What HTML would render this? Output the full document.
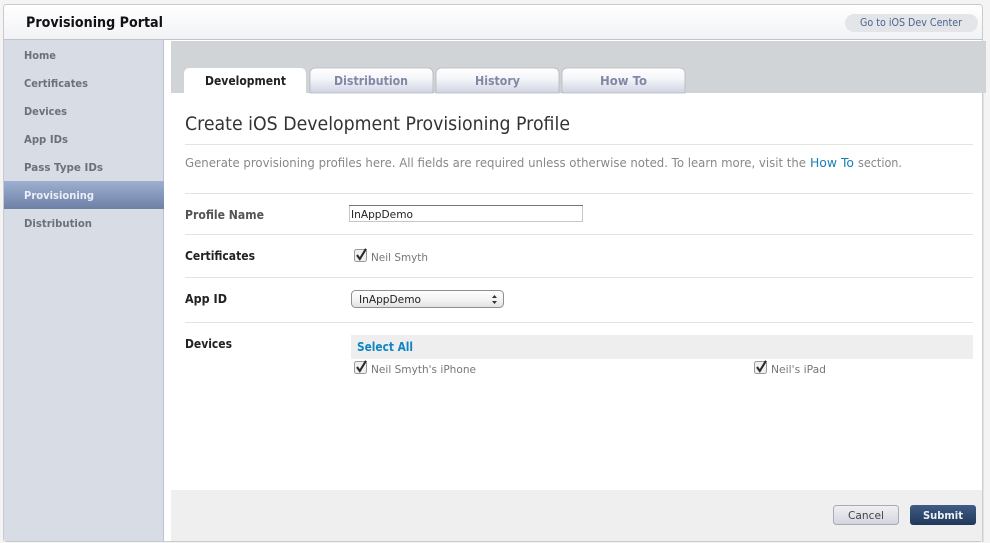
<!DOCTYPE html>
<html><head><meta charset="utf-8"><title>Provisioning Portal</title>
<style>
html,body{margin:0;padding:0;width:990px;height:543px;overflow:hidden;background:#f4f4f4}
svg{display:block;filter:blur(.35px)}
text{font-family:"DejaVu Sans","Liberation Sans",sans-serif;font-size:11px}
.b{font-weight:bold}
.nav{font-weight:bold;fill:#6c7079}
.tab{font-weight:bold;font-size:12px;fill:#8088a4}
.lab{font-weight:bold;font-size:12px;fill:#222}
.lab2{font-weight:bold;font-size:12px;fill:#555}
.d{font-size:12px;fill:#888}
.c{fill:#777}
</style></head><body>
<svg width="990" height="543" viewBox="0 0 990 543" xmlns="http://www.w3.org/2000/svg">
<defs>
<linearGradient id="hd" x1="0" y1="0" x2="0" y2="1"><stop offset="0" stop-color="#fff"/><stop offset="1" stop-color="#f1f2f5"/></linearGradient>
<linearGradient id="sel" x1="0" y1="0" x2="0" y2="1"><stop offset="0" stop-color="#9db0d0"/><stop offset="1" stop-color="#6e80a6"/></linearGradient>
<linearGradient id="tb" x1="0" y1="0" x2="0" y2="1"><stop offset="0" stop-color="#fff"/><stop offset=".45" stop-color="#f4f5f9"/><stop offset="1" stop-color="#cfd2e2"/></linearGradient>
<linearGradient id="can" x1="0" y1="0" x2="0" y2="1"><stop offset="0" stop-color="#f1f1f4"/><stop offset="1" stop-color="#d3d5de"/></linearGradient>
<linearGradient id="sub" x1="0" y1="0" x2="0" y2="1"><stop offset="0" stop-color="#3f5d85"/><stop offset="1" stop-color="#20375a"/></linearGradient>
<linearGradient id="sl" x1="0" y1="0" x2="0" y2="1"><stop offset="0" stop-color="#fff"/><stop offset=".5" stop-color="#f4f4f4"/><stop offset="1" stop-color="#e2e2e2"/></linearGradient>
<g id="chk">
<rect x="0.5" y="1.5" width="12" height="12" rx="2" fill="#f0f0f0" stroke="#9a9a9a"/>
<path d="M3 7L5.8 11L12 0.8" fill="none" stroke="#2c2c2c" stroke-width="2.1"/>
</g>
</defs>

<!-- frame -->
<rect x="4" y="40" width="979" height="502" fill="#fff"/>
<rect x="3.5" y="4.5" width="979" height="537" rx="3" fill="none" stroke="#c9cacc"/>
<path d="M4 39V8Q4 5 7 5H979Q982 5 982 8V39Z" fill="url(#hd)"/>
<rect x="4" y="39" width="978" height="1" fill="#c0c3c8"/>

<!-- sidebar -->
<rect x="4" y="40" width="160" height="501" fill="#d8dce5"/>
<rect x="163" y="40" width="1" height="501" fill="#b9c1d2"/>
<rect x="4" y="181" width="160" height="28" fill="url(#sel)"/>

<!-- tab bar -->
<rect x="171" y="41" width="815" height="52" fill="#d0d4d6"/>
<rect x="982" y="93" width="1.5" height="449" fill="#cfcfcf"/>

<!-- tabs -->
<path d="M184 93V74Q184 68 190 68H300Q306 68 306 74V93Z" fill="#fff"/>
<path d="M310 93V74Q310 68 316 68H427Q433 68 433 74V93Z" fill="url(#tb)" stroke="#b4b8be" stroke-width=".8"/>
<path d="M436 93V74Q436 68 442 68H553Q559 68 559 74V93Z" fill="url(#tb)" stroke="#b4b8be" stroke-width=".8"/>
<path d="M562 93V74Q562 68 568 68H679Q685 68 685 74V93Z" fill="url(#tb)" stroke="#b4b8be" stroke-width=".8"/>

<!-- footer -->
<rect x="171" y="490" width="811" height="51" fill="#efefef"/>

<!-- header text -->
<text x="26" y="27" class="b" style="font-size:14px" fill="#111" textLength="137" lengthAdjust="spacingAndGlyphs">Provisioning Portal</text>
<rect x="845" y="14" width="133" height="18" rx="9" fill="#e4e5e8"/>
<text x="860" y="26" style="font-size:11px" fill="#48658c" textLength="102" lengthAdjust="spacingAndGlyphs">Go to iOS Dev Center</text>

<!-- nav -->
<text x="24" y="59" class="nav" textLength="32" lengthAdjust="spacingAndGlyphs">Home</text>
<text x="24" y="87" class="nav" textLength="64" lengthAdjust="spacingAndGlyphs">Certificates</text>
<text x="24" y="115" class="nav" textLength="43" lengthAdjust="spacingAndGlyphs">Devices</text>
<text x="24" y="143" class="nav" textLength="44" lengthAdjust="spacingAndGlyphs">App IDs</text>
<text x="24" y="171" class="nav" textLength="79" lengthAdjust="spacingAndGlyphs">Pass Type IDs</text>
<text x="24" y="199" class="b" fill="#eaeef7" textLength="70" lengthAdjust="spacingAndGlyphs">Provisioning</text>
<text x="24" y="227" class="nav" textLength="68" lengthAdjust="spacingAndGlyphs">Distribution</text>

<!-- tab labels -->
<text x="205" y="85" class="b" style="font-size:12px" fill="#222" textLength="81" lengthAdjust="spacingAndGlyphs">Development</text>
<text x="334" y="85" class="tab" textLength="74" lengthAdjust="spacingAndGlyphs">Distribution</text>
<text x="475" y="85" class="tab" textLength="45" lengthAdjust="spacingAndGlyphs">History</text>
<text x="600" y="85" class="tab" textLength="47" lengthAdjust="spacingAndGlyphs">How To</text>

<!-- heading -->
<text x="185" y="130" style="font-size:19px" fill="#333" textLength="385" lengthAdjust="spacingAndGlyphs">Create iOS Development Provisioning Profile</text>
<rect x="185" y="144" width="788" height="1" fill="#e3e3e3"/>
<text x="185" y="167" class="d" textLength="621" lengthAdjust="spacingAndGlyphs">Generate provisioning profiles here. All fields are required unless otherwise noted. To learn more, visit the</text>
<text x="810" y="167" style="font-size:12px" fill="#1a7fb5" textLength="44" lengthAdjust="spacingAndGlyphs">How To</text>
<text x="858" y="167" class="d" textLength="44" lengthAdjust="spacingAndGlyphs">section.</text>

<!-- rows -->
<rect x="185" y="193" width="788" height="1" fill="#e3e3e3"/>
<rect x="185" y="234" width="788" height="1" fill="#e3e3e3"/>
<rect x="185" y="277" width="788" height="1" fill="#e3e3e3"/>
<rect x="185" y="322" width="788" height="1" fill="#e3e3e3"/>

<text x="185" y="219" class="lab2" textLength="79" lengthAdjust="spacingAndGlyphs">Profile Name</text>
<text x="185" y="260" class="lab" textLength="70" lengthAdjust="spacingAndGlyphs">Certificates</text>
<text x="185" y="303" class="lab" textLength="42" lengthAdjust="spacingAndGlyphs">App ID</text>
<text x="185" y="348" class="lab" textLength="47" lengthAdjust="spacingAndGlyphs">Devices</text>

<!-- input -->
<rect x="349.5" y="205.5" width="233" height="16" fill="#fff" stroke="#c6c6c6"/>
<rect x="349" y="205" width="234" height="1" fill="#777"/>
<text x="351" y="218" fill="#222" textLength="62" lengthAdjust="spacingAndGlyphs">InAppDemo</text>

<!-- certificate -->
<use href="#chk" x="354" y="248"/>
<text x="371" y="261" class="c" textLength="57" lengthAdjust="spacingAndGlyphs">Neil Smyth</text>

<!-- select -->
<rect x="351.5" y="290.5" width="152" height="17" rx="4" fill="url(#sl)" stroke="#8f8f8f"/>
<text x="359" y="303" fill="#222" textLength="62" lengthAdjust="spacingAndGlyphs">InAppDemo</text>
<path d="M492 298L494.5 295L497 298ZM492 301L494.5 304L497 301Z" fill="#333"/>

<!-- devices -->
<rect x="351" y="335" width="622" height="24" fill="#eeeeee"/>
<text x="357" y="351" class="b" style="font-size:12px" fill="#0f85c3" textLength="56" lengthAdjust="spacingAndGlyphs">Select All</text>
<use href="#chk" x="354" y="360"/>
<text x="371" y="373" class="c" textLength="105" lengthAdjust="spacingAndGlyphs">Neil Smyth's iPhone</text>
<use href="#chk" x="754" y="360"/>
<text x="771" y="373" class="c" textLength="55" lengthAdjust="spacingAndGlyphs">Neil's iPad</text>

<!-- buttons -->
<rect x="833.5" y="505.5" width="65" height="19" rx="3" fill="url(#can)" stroke="#a9abb2"/>
<text x="848" y="519" fill="#444" textLength="36" lengthAdjust="spacingAndGlyphs">Cancel</text>
<rect x="910" y="505" width="66" height="20" rx="3" fill="url(#sub)"/>
<text x="923" y="519" class="b" fill="#eef2f8" textLength="40" lengthAdjust="spacingAndGlyphs">Submit</text>
</svg>
</body></html>
